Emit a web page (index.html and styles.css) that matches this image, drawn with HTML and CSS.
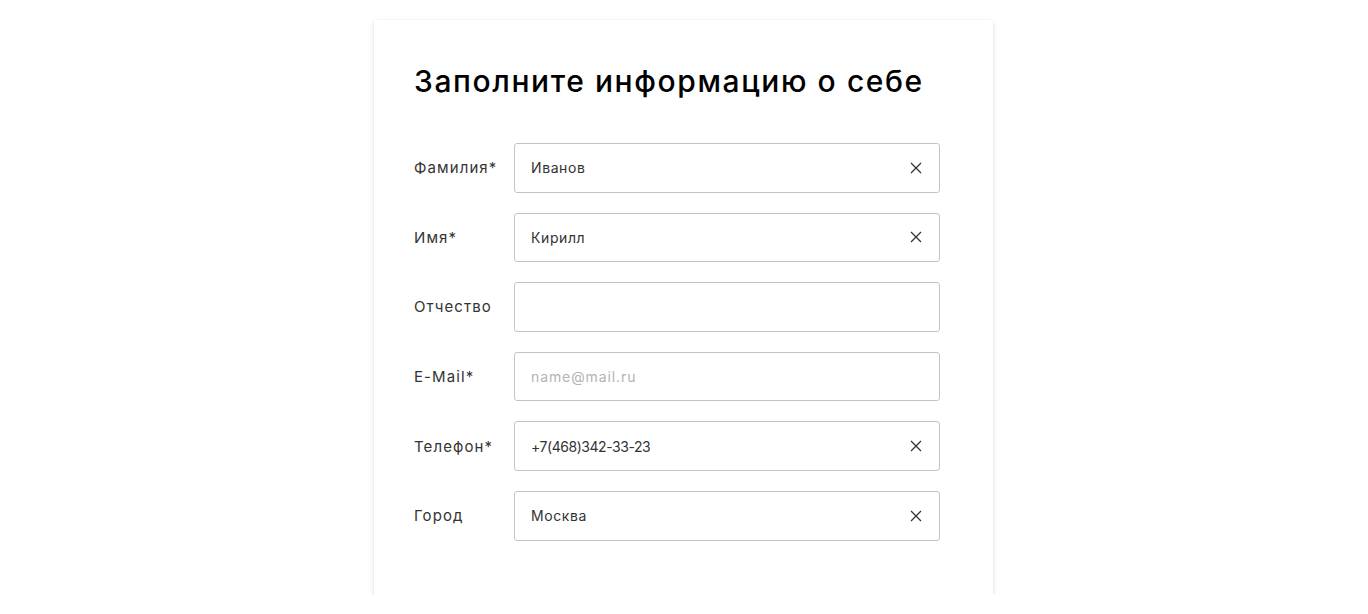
FILE: index.html
```html
<!DOCTYPE html>
<html lang="ru">
<head>
<meta charset="utf-8">
<title>Форма</title>
<link rel="stylesheet" href="styles.css">
</head>
<body>
<main class="page">
  <section class="card">
    <h1 class="title">Заполните информацию о себе</h1>
    <form class="form">
      <div class="row">
        <label class="label">Фамилия*</label>
        <div class="field"><span class="value">Иванов</span>
          <svg class="clear" viewBox="0 0 12 12" width="12" height="12"><path d="M1 1L11 11M11 1L1 11" stroke="#333" stroke-width="1.3" fill="none"/></svg></div>
      </div>
      <div class="row">
        <label class="label">Имя*</label>
        <div class="field"><span class="value">Кирилл</span>
          <svg class="clear" viewBox="0 0 12 12" width="12" height="12"><path d="M1 1L11 11M11 1L1 11" stroke="#333" stroke-width="1.3" fill="none"/></svg></div>
      </div>
      <div class="row">
        <label class="label">Отчество</label>
        <div class="field"><span class="value"></span></div>
      </div>
      <div class="row">
        <label class="label">E-Mail*</label>
        <div class="field"><span class="value placeholder">name@mail.ru</span></div>
      </div>
      <div class="row">
        <label class="label">Телефон*</label>
        <div class="field"><span class="value phone">+7(468)342-33-23</span>
          <svg class="clear" viewBox="0 0 12 12" width="12" height="12"><path d="M1 1L11 11M11 1L1 11" stroke="#333" stroke-width="1.3" fill="none"/></svg></div>
      </div>
      <div class="row">
        <label class="label">Город</label>
        <div class="field"><span class="value">Москва</span>
          <svg class="clear" viewBox="0 0 12 12" width="12" height="12"><path d="M1 1L11 11M11 1L1 11" stroke="#333" stroke-width="1.3" fill="none"/></svg></div>
      </div>
    </form>
  </section>
</main>
</body>
</html>
```

FILE: styles.css
```css
* { box-sizing: border-box; }
html, body { margin: 0; padding: 0; background: #fff; }
body { font-family: Inter, "DejaVu Sans", sans-serif; color: #1a1a1a; }
.page { display: flex; justify-content: center; padding-top: 20px; }
.card {
  width: 619px;
  margin-left: -1px;
  background: #fff;
  padding: 39px 40px 54px 40px;
  box-shadow: 0 2px 5px rgba(0,0,0,0.12), 0 0 2px rgba(0,0,0,0.05);
}
.title {
  margin: 0 0 40px 0;
  font-size: 30px;
  line-height: 44px;
  font-weight: 500;
  color: #000;
  letter-spacing: 1.6px;
}
.form { display: flex; flex-direction: column; gap: 20px; }
.row { display: flex; align-items: center; }
.label { width: 100px; font-size: 15px; color: #333; letter-spacing: 1.1px; }
.field {
  width: 426px; height: 49.6px;
  border: 1px solid #c4c4c4; border-radius: 3px;
  display: flex; align-items: center; justify-content: space-between;
  padding: 0 17px 0 16px;
}
.value { font-size: 14px; color: #333; letter-spacing: 0.6px; }
.phone { letter-spacing: -0.45px; }
.placeholder { color: #b3b3b3; letter-spacing: 0.9px; }
.clear { display: block; }
```
